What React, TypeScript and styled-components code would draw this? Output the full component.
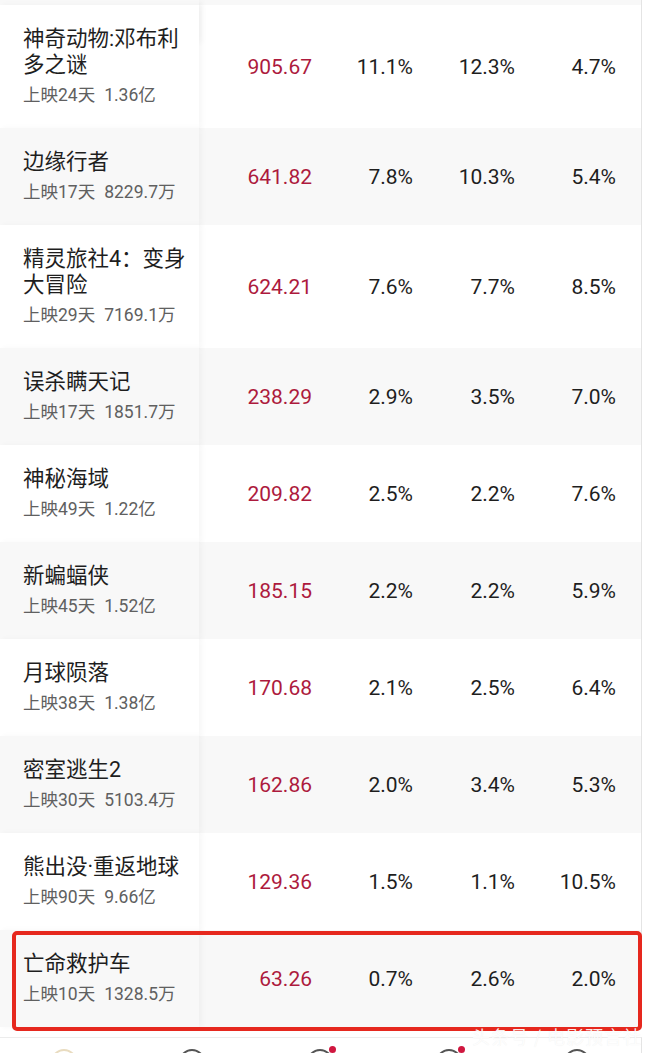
import React, { FC } from "react";
import styled, { createGlobalStyle } from "styled-components";

interface IMovie {
  name: string;
  days: number;
  total: string;
  boxOffice: string;
  share: string;
  screening: string;
  attendance: string;
  highlight?: boolean;
}

const movies: IMovie[] = [
  { name: "神奇动物:邓布利多之谜", days: 24, total: "1.36亿", boxOffice: "905.67", share: "11.1%", screening: "12.3%", attendance: "4.7%" },
  { name: "边缘行者", days: 17, total: "8229.7万", boxOffice: "641.82", share: "7.8%", screening: "10.3%", attendance: "5.4%" },
  { name: "精灵旅社4：变身大冒险", days: 29, total: "7169.1万", boxOffice: "624.21", share: "7.6%", screening: "7.7%", attendance: "8.5%" },
  { name: "误杀瞒天记", days: 17, total: "1851.7万", boxOffice: "238.29", share: "2.9%", screening: "3.5%", attendance: "7.0%" },
  { name: "神秘海域", days: 49, total: "1.22亿", boxOffice: "209.82", share: "2.5%", screening: "2.2%", attendance: "7.6%" },
  { name: "新蝙蝠侠", days: 45, total: "1.52亿", boxOffice: "185.15", share: "2.2%", screening: "2.2%", attendance: "5.9%" },
  { name: "月球陨落", days: 38, total: "1.38亿", boxOffice: "170.68", share: "2.1%", screening: "2.5%", attendance: "6.4%" },
  { name: "密室逃生2", days: 30, total: "5103.4万", boxOffice: "162.86", share: "2.0%", screening: "3.4%", attendance: "5.3%" },
  { name: "熊出没·重返地球", days: 90, total: "9.66亿", boxOffice: "129.36", share: "1.5%", screening: "1.1%", attendance: "10.5%" },
  { name: "亡命救护车", days: 10, total: "1328.5万", boxOffice: "63.26", share: "0.7%", screening: "2.6%", attendance: "2.0%", highlight: true },
];

const tabs = [{ badge: false }, { badge: false }, { badge: true }, { badge: true }, { badge: false }];

const GlobalStyle = createGlobalStyle`
  html, body {
    margin: 0;
    padding: 0;
    background: #fff;
  }
  body {
    font-family: Roboto, "Noto Sans CJK SC", sans-serif;
  }
`;

const MovieRow: FC<{ movie: IMovie; striped: boolean }> = ({ movie, striped }) => (
  <StyledRow $striped={striped}>
    <StyledNameCell $striped={striped}>
      <StyledTitle>{movie.name}</StyledTitle>
      <StyledSub>
        <span>上映{movie.days}天</span>
        <StyledTotal>{movie.total}</StyledTotal>
      </StyledSub>
    </StyledNameCell>
    <StyledValue $red>{movie.boxOffice}</StyledValue>
    <StyledValue>{movie.share}</StyledValue>
    <StyledValue>{movie.screening}</StyledValue>
    <StyledValue>{movie.attendance}</StyledValue>
    {movie.highlight && <StyledHighlight />}
  </StyledRow>
);

const App: FC = () => {
  return (
    <>
      <GlobalStyle />
      <StyledPage>
        <StyledTable>
          {/* tail of the row above, scrolled out of view */}
          <StyledRow $striped $cut>
            <StyledNameCell $striped />
          </StyledRow>
          {movies.map((m, i) => (
            <MovieRow key={m.name} movie={m} striped={i % 2 === 1} />
          ))}
        </StyledTable>
        <StyledTabBar>
          {tabs.map((t, i) => (
            <StyledTab key={i}>
              <StyledTabIcon $faint={i === 0} />
              {t.badge && <StyledBadge />}
            </StyledTab>
          ))}
        </StyledTabBar>
        <StyledWatermark>头条号 / 电影预言社</StyledWatermark>
      </StyledPage>
    </>
  );
};

const StyledPage = styled.div`
  position: relative;
  width: 646px;
  height: 1053px;
  overflow: hidden;
  background: #fff;
`;

const StyledTable = styled.div`
  width: 641px;
  border-right: 1px solid #e4e4e4;
`;

const StyledRow = styled.div<{ $striped?: boolean; $cut?: boolean }>`
  position: relative;
  display: grid;
  grid-template-columns: 199px 113px 101px 102px 101px 1fr;
  align-items: center;
  background: ${(p) => (p.$striped ? "#f8f8f8" : "#ffffff")};
  height: ${(p) => (p.$cut ? "5px" : "auto")};
`;

const StyledNameCell = styled.div<{ $striped?: boolean }>`
  position: relative;
  z-index: 1;
  align-self: stretch;
  box-sizing: border-box;
  padding: 21px 6px 22px 23px;
  background: ${(p) => (p.$striped ? "#f8f8f8" : "#ffffff")};
  box-shadow: 3px 0 6px rgba(0, 0, 0, 0.035);
`;

const StyledTitle = styled.div`
  font-family: Roboto, "Noto Sans CJK SC", sans-serif;
  font-size: 21.5px;
  line-height: 26px;
  color: #1e1e1e;
`;

const StyledSub = styled.div`
  margin-top: 6px;
  font-size: 17.5px;
  line-height: 22px;
  color: #606060;
  white-space: nowrap;
`;

const StyledTotal = styled.span`
  margin-left: 9px;
`;

const StyledValue = styled.div<{ $red?: boolean }>`
  text-align: right;
  font-family: Roboto, "Noto Sans", sans-serif;
  font-size: 21px;
  line-height: 26px;
  color: ${(p) => (p.$red ? "#ad1a3d" : "#1e1e1e")};
`;

const StyledHighlight = styled.div`
  position: absolute;
  z-index: 2;
  left: 12px;
  right: -1px;
  top: 1px;
  bottom: -4px;
  border: 4px solid #e6281e;
  border-radius: 5px;
  pointer-events: none;
`;

const StyledTabBar = styled.div`
  display: grid;
  grid-template-columns: repeat(5, 1fr);
  margin-top: 10px;
  width: 641px;
  border-top: 1px solid #ececec;
  border-right: 1px solid #e4e4e4;
  padding-top: 11px;
  height: 40px;
`;

const StyledTab = styled.div`
  position: relative;
  display: flex;
  justify-content: center;
`;

const StyledTabIcon = styled.div<{ $faint?: boolean }>`
  width: 22px;
  height: 22px;
  border-radius: 50%;
  border: 2px solid ${(p) => (p.$faint ? "#e9dcc0" : "#555")};
`;

const StyledBadge = styled.div`
  position: absolute;
  top: -3px;
  left: calc(50% + 9px);
  width: 7px;
  height: 7px;
  border-radius: 50%;
  background: #d0173f;
`;

const StyledWatermark = styled.div`
  position: absolute;
  z-index: 3;
  left: 472px;
  top: 1023px;
  font-family: "Noto Sans CJK SC", sans-serif;
  font-size: 18px;
  letter-spacing: 1px;
  color: rgba(255, 255, 255, 0.92);
  text-shadow: 0 0 1px rgba(0, 0, 0, 0.08);
  white-space: nowrap;
`;

export default App;
